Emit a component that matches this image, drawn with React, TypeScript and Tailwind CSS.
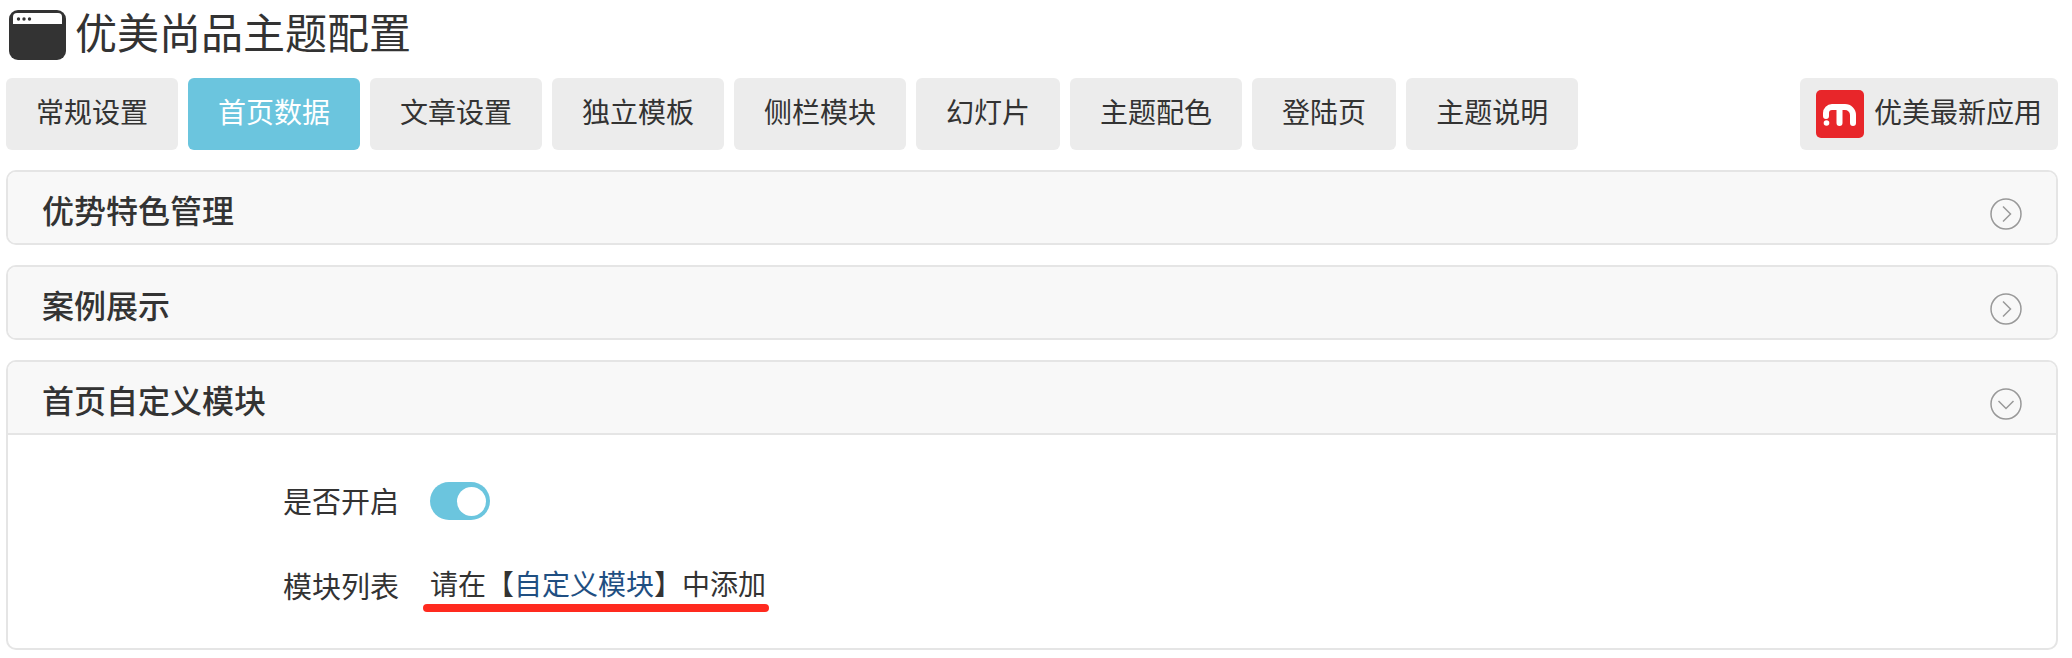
import React from 'react';

const TABS = ['常规设置', '首页数据', '文章设置', '独立模板', '侧栏模块', '幻灯片', '主题配色', '登陆页', '主题说明'];
const FONT = "font-['Liberation_Sans','Noto_Sans_CJK_SC',sans-serif]";

const WindowIcon = () => (
  <svg width="57" height="50" viewBox="0 0 57 50" className="shrink-0">
    <rect x="0" y="0" width="57" height="50" rx="9" fill="#333" />
    <path d="M4 14V7a4 4 0 0 1 4-4h41a4 4 0 0 1 4 4v7z" fill="#fff" />
    <circle cx="9.500" cy="9" r="1.700" fill="#333" />
    <circle cx="15" cy="9" r="1.700" fill="#333" />
    <circle cx="20.500" cy="9" r="1.700" fill="#333" />
  </svg>
);

const LogoIcon = () => (
  <svg width="48" height="48" viewBox="0 0 48 48" className="shrink-0">
    <rect width="48" height="48" rx="5" fill="#e8262a" />
    <path d="M10 26v-3a6 6 0 0 1 6-6h13a8 8 0 0 1 8 8v8M23.500 33V18" fill="none" stroke="#fff" strokeWidth="6" strokeLinecap="round" />
    <circle cx="10.500" cy="33" r="2.800" fill="#fff" />
  </svg>
);

const Chevron = ({ open }: { open?: boolean }) => (
  <svg width="32" height="32" viewBox="0 0 32 32" className="shrink-0 mt-[13px]">
    <circle cx="16" cy="16" r="15" fill="none" stroke="#999" strokeWidth="1.500" />
    <path d={open ? 'M8.500 13l7.500 7.500 7.500-7.500' : 'M13 8.500l7.500 7.500-7.500 7.500'} fill="none" stroke="#999" strokeWidth="1.500" />
  </svg>
);

const PanelHead = ({ title, open }: { title: string; open?: boolean }) => (
  <div className={`pl-[34px] pr-[34px] flex items-center justify-between bg-[#f8f8f8] ${open ? 'h-[73px] border-b-2 border-[#e5e5e5]' : 'h-[71px]'}`}>
    <h3 className="text-[32px] leading-none font-medium text-[#333] pt-[9px]">{title}</h3>
    <Chevron open={open} />
  </div>
);

export default function App() {
  return (
    <div className={`${FONT} bg-white h-[658px] pl-[6px] pr-[14px] text-[#333] overflow-hidden`}>
      <div className="h-[78px] flex items-start gap-[9px] pl-[3px] pt-[10px]">
        <WindowIcon />
        <h1 className="text-[42px] leading-[50px] font-normal">优美尚品主题配置</h1>
      </div>

      <div className="flex justify-between">
        <div className="flex gap-[10px]">
          {TABS.map((t, i) => (
            <div
              key={t}
              className={`h-[72px] px-[30px] flex items-center text-[28px] rounded-[6px] ${i === 1 ? 'bg-[#6bc5de] text-white' : 'bg-[#ececec] text-[#333]'}`}
            >
              {t}
            </div>
          ))}
        </div>
        <div className="h-[72px] w-[258px] pl-[16px] flex items-center gap-[10px] text-[28px] bg-[#ececec] rounded-[6px]">
          <LogoIcon />
          <span>优美最新应用</span>
        </div>
      </div>

      <div className="mt-[20px] flex flex-col gap-[20px]">
        <div className="border-2 border-[#e5e5e5] rounded-[10px] overflow-hidden">
          <PanelHead title="优势特色管理" />
        </div>
        <div className="border-2 border-[#e5e5e5] rounded-[10px] overflow-hidden">
          <PanelHead title="案例展示" />
        </div>
        <div className="border-2 border-[#e5e5e5] rounded-[10px] overflow-hidden">
          <PanelHead title="首页自定义模块" open />
          <div className="h-[213px] pl-[275px] pt-[47px] flex flex-col gap-[46px] text-[28px]">
            <div className="flex items-center gap-[31px] h-[38px]">
              <span className="w-[116px] text-[29px] leading-none pt-[4px]">是否开启</span>
              <div className="w-[60px] h-[38px] rounded-full bg-[#6bc5de] flex items-center justify-end pr-[4px]">
                <div className="w-[29px] h-[29px] rounded-full bg-white" />
              </div>
            </div>
            <div className="flex items-center gap-[31px] h-[40px]">
              <span className="w-[116px] text-[29px] leading-none pt-[4px]">模块列表</span>
              <span className="relative leading-none whitespace-nowrap">
                请在【<span className="text-[#1f4f82]">自定义模块</span>】中添加
                <span className="absolute left-[-7px] top-[32px] w-[346px] h-[8px] rounded-full bg-[#ff2a1f]" />
              </span>
            </div>
          </div>
        </div>
      </div>
    </div>
  );
}
